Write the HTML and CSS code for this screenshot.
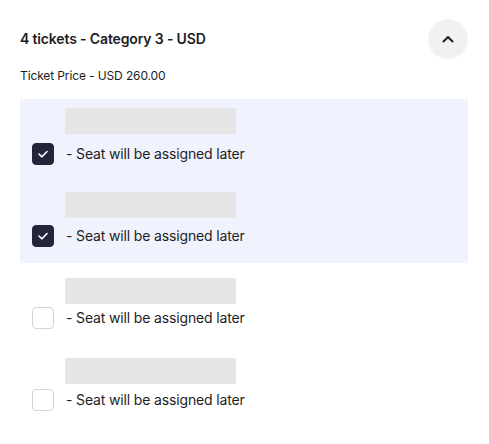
FILE: index.html
```html
<!DOCTYPE html>
<html lang="en">
<head>
<meta charset="utf-8">
<link rel="stylesheet" href="styles.css">
</head>
<body>
<section class="panel">
  <header class="panel-head">
    <h2 class="title">4 tickets - Category 3 - USD</h2>
    <button class="toggle" type="button" aria-label="Collapse">
      <svg width="12" height="8" viewBox="0 0 12 8"><path d="M1.5 6.5 L6 2 L10.5 6.5" fill="none" stroke="#222" stroke-width="2" stroke-linecap="round" stroke-linejoin="round"/></svg>
    </button>
  </header>
  <p class="price">Ticket Price - USD 260.00</p>
  <div class="seats">
    <div class="selected">
      <div class="seat">
        <div class="skeleton"></div>
        <label class="line">
          <span class="box checked"><svg width="12" height="10" viewBox="0 0 12 10"><path d="M2 5 L5 7.8 L10 2.5" fill="none" stroke="#fff" stroke-width="1.6" stroke-linecap="round" stroke-linejoin="round"/></svg></span>
          <span class="label">- Seat will be assigned later</span>
        </label>
      </div>
      <div class="seat">
        <div class="skeleton"></div>
        <label class="line">
          <span class="box checked"><svg width="12" height="10" viewBox="0 0 12 10"><path d="M2 5 L5 7.8 L10 2.5" fill="none" stroke="#fff" stroke-width="1.6" stroke-linecap="round" stroke-linejoin="round"/></svg></span>
          <span class="label">- Seat will be assigned later</span>
        </label>
      </div>
    </div>
    <div class="unselected">
      <div class="seat">
        <div class="skeleton"></div>
        <label class="line">
          <span class="box"></span>
          <span class="label">- Seat will be assigned later</span>
        </label>
      </div>
      <div class="seat">
        <div class="skeleton"></div>
        <label class="line">
          <span class="box"></span>
          <span class="label">- Seat will be assigned later</span>
        </label>
      </div>
    </div>
  </div>
</section>
</body>
</html>
```

FILE: styles.css
```css
* { box-sizing: border-box; }
html, body { margin: 0; padding: 0; background: #fff; }
body {
  font-family: Inter, "Noto Sans", sans-serif;
  color: #1d1d1f;
}
.panel {
  padding: 19px 21px 0 20px;
}
.panel-head {
  display: flex;
  align-items: center;
  justify-content: space-between;
  height: 40px;
}
.title {
  margin: 0;
  font-size: 14px;
  font-weight: 600;
  line-height: 20px;
  letter-spacing: -0.15px;
}
.toggle {
  width: 40px;
  height: 40px;
  border: 0;
  border-radius: 50%;
  background: #f1f1f1;
  display: flex;
  align-items: center;
  justify-content: center;
  padding: 0;
}
.price {
  margin: 9px 0 0;
  font-size: 12px;
  line-height: 16px;
  letter-spacing: -0.12px;
  color: #1d1d1f;
}
.seats {
  margin-top: 15px;
}
.selected {
  background: #f0f3fd;
}
.seat {
  height: 82px;
  padding: 0 12px;
  display: flex;
  flex-direction: column;
}
.skeleton {
  width: 171px;
  height: 26px;
  margin-left: 33px;
  background: #e6e6e6;
}
.line {
  display: flex;
  align-items: center;
  gap: 12px;
  height: 22px;
}
.selected .seat:nth-child(1) .skeleton { margin-top: 9px; }
.selected .seat:nth-child(1) .line { margin-top: 9px; }
.selected .seat:nth-child(2) .skeleton { margin-top: 11px; }
.selected .seat:nth-child(2) .line { margin-top: 7px; }
.unselected .seat:nth-child(1) .skeleton { margin-top: 15px; }
.unselected .seat:nth-child(1) .line { margin-top: 3px; }
.unselected .seat:nth-child(2) .skeleton { margin-top: 13px; }
.unselected .seat:nth-child(2) .line { margin-top: 5px; }
.box {
  width: 22px;
  height: 22px;
  border-radius: 4px;
  border: 1px solid #d4d4d4;
  background: #fff;
  display: flex;
  align-items: center;
  justify-content: center;
  flex: none;
}
.box.checked {
  background: #25253a;
  border-color: #25253a;
}
.label {
  font-size: 14px;
  line-height: 22px;
  letter-spacing: -0.15px;
  color: #1d1d1f;
}
```
